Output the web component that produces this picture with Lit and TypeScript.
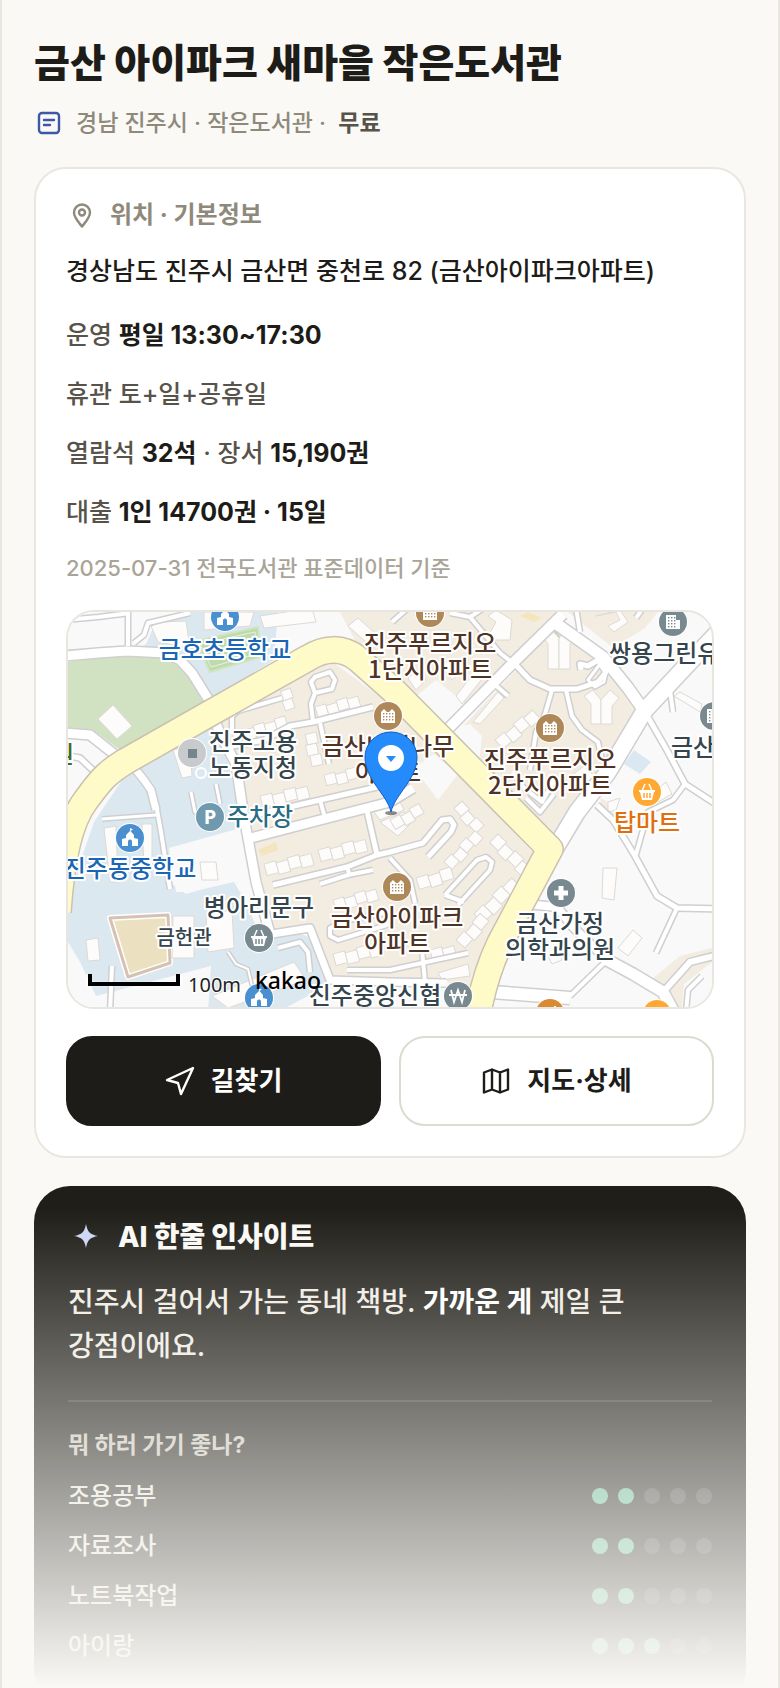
import { LitElement, html, svg, css } from 'lit';
import { customElement, property } from 'lit/decorators.js';

type Place = { x: number; y: number; lines: string[]; tone: string; anchor?: string; small?: boolean };

// [width, points]
const roads: [number, string][] = [
  [4, '-2,8 30,5 62,1'],
  [4, '60,-4 60,34'],
  [4, '66,31 76,23 80,11 122,1'],
  [9, '-4,44 30,41 59,39 98,41 112,48 124,61 142,90'],
  [9, '-4,121 22,123 46,142'],
  [5, '-4,143 12,146 30,163'],
  [7, '64,153 76,168 83,178 88,198'],
  [4, '88,192 93,220 102,277'],
  [3, '34,207 88,203'],
  [3, '123,180 127,200 138,203'],
  [3, '148,172 152,192'],
  [9, '147,108 152,122 168,152 176,205 188,270 202,322'],
  [4, '164,122 164,104 170,99 214,86'],
  [5, '160,135 196,128 222,114 245,110 305,95'],
  [4, '245,110 243,92 247,81 264,77 267,68 262,60 247,65 243,70 247,81'],
  [4, '252,111 261,152'],
  [5, '178,205 252,188 309,175 340,168'],
  [9, '183,226 252,208 322,190 345,176'],
  [4, '252,188 257,206'],
  [5, '205,273 279,255 309,243 299,199'],
  [4, '252,272 280,263 305,258'],
  [4, '279,255 282,264'],
  [4, '322,312 270,328 262,324 262,316 280,308 322,300'],
  [7, '204,322 242,316 262,368 322,370 378,371'],
  [4, '210,336 232,330 240,340 242,360'],
  [4, '279,358 322,358 354,351 400,341'],
  [4, '354,338 357,370'],
  [5, '309,243 322,240 355,231 374,208 382,207 386,213 383,220 360,245'],
  [4, '322,246 342,268 347,291'],
  [4, '377,283 409,248 418,245 424,250 422,258 390,293'],
  [4, '377,283 396,290'],
  [4, '382,1 402,5 432,41 445,51'],
  [4, '340,-4 324,10'],
  [4, '402,5 416,-4'],
  [4, '424,70 440,84'],
  [10, '495,2 445,51 379,118'],
  [5, '447,52 462,68 482,77 509,77 530,70 538,60 530,48 520,54 512,52 513,58'],
  [3, '538,60 536,70 527,75 520,68 532,52'],
  [4, '484,78 477,102 468,120 462,158'],
  [4, '498,78 504,104 514,118 530,130 534,148'],
  [4, '444,160 456,176 474,190 486,168'],
  [11, '483,8 535,45 560,76 577,100'],
  [4, '508,-4 512,20'],
  [4, '575,-4 568,6'],
  [16, '656,14 618,54 577,98 540,160 509,200 485,240'],
  [5, '577,100 600,140 617,172 660,200'],
  [4, '617,172 605,188 580,200 567,246'],
  [4, '602,78 605,100'],
  [5, '529,193 545,208 567,244 589,284 609,296 650,297'],
  [4, '609,296 588,341'],
  [4, '458,186 472,200 486,182'],
  [8, '458,292 489,295 505,315 539,348'],
  [12, '424,380 502,386'],
  [4, '502,384 539,348'],
  [11, '539,348 565,362 595,380 606,400'],
  [6, '597,378 622,350 650,343'],
  [4, '618,400 620,378 634,364'],
  [4, '44,354 42,400'],
  [2, '160,340 168,352 180,357 184,374'],
];

const lots: [string, string][] = [
  ['school', '62,42 78,32 86,14 122,0 210,0 206,48 142,88 124,60 104,44'],
  ['school', '64,153 142,110 160,150 176,218 102,236 108,280 122,280 166,270 178,290 192,324 228,320 254,330 262,372 210,400 140,400 143,354 28,384 12,350 0,330 0,290 8,262 26,210'],
  ['plain', '0,50 0,0 86,0 78,24 60,38'],
  ['plain', '101,236 176,215 190,280 166,268 118,282 104,272'],
  ['park', '-2,50 59,43 99,45 119,61 135,90 52,138 25,118 -2,116'],
  ['pitch', '128,29 190,15 193,45 142,60'],
  ['home', '152,105 259,46 322,92 469,245 408,400 378,368 262,368 242,316 205,318 175,188'],
  ['home', '272,0 492,0 445,48 376,118 362,104 292,38'],
  ['home', '450,56 487,14 535,50 570,98 527,165 482,230 384,126'],
  ['home', '500,0 590,0 577,16 545,36'],
  ['home', '532,186 540,190 560,230 536,204'],
  ['home', '578,372 612,344 644,336 644,350 616,372 614,396 602,396'],
  ['plain', '346,86 368,68 388,84 402,96 378,118 366,116'],
  ['plain', '386,116 402,112 414,124 410,160 386,130'],
  ['plain', '346,156 366,142 390,162 370,188'],
  ['pond', '556,152 566,138 583,150 572,162'],
  ['grass', '482,22 487,18 495,28 490,32'],
  ['sand', '190,238 208,230 210,238 194,244'],
  ['sand', '452,4 460,0 474,6 466,10'],
  ['plain', '616,386 630,362 644,358 644,396 616,396'],
];

const houses = [
  '30,107 45,93 64,114 49,127', '83,14 94,10 118,9 122,36 90,30', '136,0 186,0 182,14 136,18',
  '192,4 244,-4 248,10 196,16', '105,138 122,134 124,164 114,166', '36,216 48,214 50,270 42,270',
  '74,212 84,212 84,254 76,254', '132,250 148,250 150,268 134,268', '105,304 126,304 126,346 104,346',
  '138,302 164,298 166,336 140,340', '18,328 30,326 32,348 20,349', '144,384 226,350 238,368 160,396',
  '535,256 549,256 546,288 534,286', '550,336 565,318 574,326 560,344', '606,84 612,80 634,92 632,100',
  '388,84 410,56 418,62 394,92', '405,110 430,80 436,86 412,112', '370,361 400,352 402,364 374,368',
  '480,57 480,32 473,22 482,16 491,26 491,57', '491,57 491,26 500,16 508,24 502,32 502,57',
  '523,112 523,92 516,84 525,78 533,88 533,112', '533,112 533,88 542,78 551,86 544,94 544,112',
  '418,28 428,10 420,4 428,-2 444,8 442,28', '528,4 548,0 552,8 540,14 546,20 560,10 552,-2',
  '280,14 290,6 308,22 298,30', '374,54 384,46 394,60 384,68', '340,66 350,58 358,68 348,78',
  '500,166 516,154 526,164 514,174', '540,190 552,186 548,198 540,200', '586,180 598,170 604,182 590,190',
  '306,200 332,190 336,198 312,208', '312,210 336,200 342,212 330,224', '480,344 490,340 494,348 484,352',
];

// x, y, angle, count, size
const rows: [number, number, number, number, number][] = [
  [222, 76, 70, 2, 10], [247, 95, -17, 4, 11], [164, 120, -17, 5, 11], [248, 120, 78, 3, 11],
  [192, 184, -14, 4, 12], [256, 163, -14, 4, 11], [196, 252, -15, 4, 12], [250, 238, -15, 4, 12],
  [265, 288, -17, 4, 11], [265, 342, -15, 4, 12], [322, 208, -30, 3, 11], [394, 189, 48, 3, 11],
  [348, 266, -18, 3, 12], [376, 250, -48, 4, 11], [430, 222, 44, 4, 12], [406, 302, -46, 4, 13],
  [362, 338, -15, 2, 12], [388, 328, -48, 3, 12], [427, 128, -41, 4, 12],
];

const places: Place[] = [
  { x: 157, y: 46, lines: ['금호초등학교'], tone: 'blue' },
  { x: 362, y: 40, lines: ['진주푸르지오', '1단지아파트'], tone: 'brown' },
  { x: 541, y: 50, lines: ['쌍용그린유치원'], tone: 'slate', anchor: 'start' },
  { x: 482, y: 156, lines: ['진주푸르지오', '2단지아파트'], tone: 'brown' },
  { x: 603, y: 144, lines: ['금산면사무소'], tone: 'slate', anchor: 'start' },
  { x: 320, y: 143, lines: ['금산비치나무', '아파트'], tone: 'brown' },
  { x: 579, y: 219, lines: ['탑마트'], tone: 'orange' },
  { x: 185, y: 138, lines: ['진주고용', '노동지청'], tone: 'slate' },
  { x: 192, y: 213, lines: ['주차장'], tone: 'teal' },
  { x: 62, y: 265, lines: ['진주동중학교'], tone: 'blue' },
  { x: 191, y: 304, lines: ['병아리문구'], tone: 'slate' },
  { x: 116, y: 333, lines: ['금헌관'], tone: 'slate', small: true },
  { x: 329, y: 314, lines: ['금산아이파크', '아파트'], tone: 'brown' },
  { x: 492, y: 320, lines: ['금산가정', '의학과의원'], tone: 'slate' },
  { x: 307, y: 392, lines: ['진주중앙신협'], tone: 'slate' },
  { x: 6, y: 151, lines: ['공원'], tone: 'green', anchor: 'end' },
];

const markers: [number, number, string, string][] = [
  [157, 5, '#4a90d0', 'school'], [62, 226, '#4a90d0', 'school'], [191, 386, '#4a90d0', 'school'],
  [362, 1, '#ae8858', 'flats'], [482, 116, '#ae8858', 'flats'], [320, 104, '#ae8858', 'flats'],
  [329, 275, '#ae8858', 'flats'], [605, 10, '#788990', 'office'], [646, 104, '#788990', 'office'],
  [579, 180, '#ffa933', 'basket'], [191, 326, '#788990', 'basket'], [142, 205, '#6f99ae', 'parking'],
  [493, 281, '#788990', 'cross'], [390, 384, '#788990', 'won'], [482, 401, '#d98a33', 'food'],
  [589, 402, '#ffa933', 'cross'],
];

const windows = (x: number, y: number, cols: number, lines: number, fill: string) =>
  Array.from({ length: cols * lines }, (_, i) => svg`
    <rect x=${x + (i % cols) * 3} y=${y + Math.floor(i / cols) * 3} width="1.4" height="1.4" fill=${fill} />`);

const glyph = (kind: string, color: string) => {
  switch (kind) {
    case 'school':
      return svg`<path fill="#fff" d="M-8 8V1l4-1v-3l4-4v-3l3 1.500-2.500 1.500 3.500 4v3l4 1v7h-6V3.500a2 2 0 0 0-4 0V8z" />`;
    case 'flats':
      return svg`<path fill="#fff" d="M-7 7V-4l3-3 3 3h2l3-3 3 3V7z" />${windows(-5, -3, 4, 3, color)}`;
    case 'office':
      return svg`<path fill="#fff" d="M-7 7V-7H3v5h4V7z" />${windows(-5, -5, 3, 4, color)}`;
    case 'basket':
      return svg`
        <path fill="#fff" d="M-8-2H8V0H7L5 8H-5L-7 0h-1z" />
        <path fill="none" stroke="#fff" stroke-width="1.500" d="M-5-1-2-8M5-1 2-8" />
        <path stroke=${color} stroke-width="1.500" d="M-3 1v5M0 1v5M3 1v5" />`;
    case 'cross':
      return svg`<path fill="#fff" d="M-2.500-7h5v4.500H7v5H2.500V7h-5V2.500H-7v-5h4.500z" />`;
    case 'parking':
      return svg`<text class="sign" y="7">P</text>`;
    case 'won':
      return svg`<path fill="none" stroke="#fff" stroke-width="1.800" d="M-7-6-4 6 0-6 4 6 7-6M-9-1H9" />`;
    default:
      return svg`<path fill="none" stroke="#fff" stroke-width="2" d="M-8-3h6v5h-6zM1-5v9M5-7V6M1-1h4" />`;
  }
};

@customElement('area-map')
export class AreaMap extends LitElement {
  static styles = css`
    :host {
      display: block;
      border: 2px solid #e9e6df;
      border-radius: 28px;
      overflow: hidden;
    }
    svg {
      display: block;
      width: 100%;
      height: auto;
      background: #f9f9f9;
    }
    .school { fill: #dce8f0; }
    .plain { fill: #f9f9f9; }
    .park { fill: #d1e2c3; }
    .pitch { fill: #bfdbae; stroke: #cfe5c0; stroke-width: 2; }
    .home { fill: #f3ece1; }
    .pond { fill: #dbe8f1; }
    .grass { fill: #bfdbae; }
    .sand { fill: #f3e6be; }
    .house { fill: #fdfcfa; stroke: #dcdad6; stroke-width: 1; }
    .line { fill: none; stroke-linejoin: round; stroke-linecap: butt; }
    .casing { stroke: #cfcfd1; }
    .road { stroke: #fff; }
    .main-casing { stroke: #cbc1b0; stroke-width: 28; }
    .main { stroke: #fffbc9; stroke-width: 25; }
    .label {
      font-family: "Noto Sans CJK KR", sans-serif;
      font-size: 24px;
      font-weight: 500;
      text-anchor: middle;
      stroke: #fff;
      stroke-width: 4px;
      stroke-linejoin: round;
      paint-order: stroke;
    }
    .small { font-size: 20px; }
    .start { text-anchor: start; }
    .end { text-anchor: end; }
    .blue { fill: #1a66b5; }
    .brown { fill: #4f3325; }
    .slate { fill: #34454d; }
    .orange { fill: #e0700e; }
    .teal { fill: #2b6b84; }
    .green { fill: #3f6b2a; }
    .sign {
      font: 700 20px "Open Sans", sans-serif;
      fill: #fff;
      text-anchor: middle;
    }
    .scale { font: 20px "Noto Sans", sans-serif; fill: #222; stroke: #fff; stroke-width: 2px; paint-order: stroke; }
    .brand { font: 500 23px "Noto Sans", sans-serif; }
  `;

  render() {
    return html`
      <svg viewBox="0 0 644 395" role="img" aria-label="지도">
        ${lots.map(([kind, points]) => svg`<polygon class=${kind} points=${points} />`)}
        <path d="M42 306 100 303 102 351 60 365z" fill="#ebe0c0" stroke="#fff" stroke-width="6" stroke-linejoin="round" />
        <path d="M42 306 100 303 102 351 60 365z" fill="none" stroke="#d6c1b3" stroke-width="3" stroke-linejoin="round" />
        <path d="M132 32l55-12 2 22-46 13zM160 26l4 23" fill="none" stroke="#e6f2dd" stroke-width="1" />
        ${houses.map(points => svg`<polygon class="house" points=${points} />`)}
        ${rows.map(([x, y, angle, count, size]) => svg`
          <g transform="translate(${x} ${y}) rotate(${angle})">
            ${Array.from({ length: count }, (_, i) => svg`
              <rect class="house" x=${i * size} y=${(i % 2) * 2} width=${size} height=${size} />`)}
          </g>`)}
        ${roads.map(([width, points]) => svg`
          <polyline class="line casing" points=${points} stroke-width=${width + 3} />`)}
        ${roads.map(([width, points]) => svg`
          <polyline class="line road" points=${points} stroke-width=${width} />`)}
        ${['main-casing', 'main'].map(kind => svg`
          <path class="line ${kind}" d="M-10 300C-6 240 4 206 18 188C34 166 40 160 58 149L139 103 240 46C256 36 274 34 290 47L325 78 482 237 432 331Q418 360 410 400" />`)}

        ${markers.map(([x, y, color, kind]) => svg`
          <g transform="translate(${x} ${y})">
            <circle r="15" fill="#fff" />
            <circle r="14" fill=${color} />
            ${glyph(kind, color)}
          </g>`)}
        <circle cx="124" cy="141" r="15" fill="#fff" />
        <circle cx="124" cy="141" r="14" fill="#c9cacd" />
        <rect x="120" y="137" width="9" height="9" fill="#73868c" />
        <circle cx="133" cy="161" r="5" fill="#dce8f0" stroke="#fff" stroke-width="2" />

        <path d="M20 374V362M112 374V362M18 372H114" fill="none" stroke="#fff" stroke-width="5" opacity="0.6" />
        <path d="M22 362V372H110V362" fill="none" stroke="#000" stroke-width="4" />
        <text class="scale" x="120" y="380">100m</text>

        ${places.map(p => svg`
          <text class="label ${p.tone} ${p.anchor ?? ''} ${p.small ? 'small' : ''}">
            ${p.lines.map((line, i) => svg`<tspan x=${p.x} y=${p.y + i * 26}>${line}</tspan>`)}
          </text>`)}
        <text class="brand" x="187" y="377">kakao</text>

        <ellipse cx="323" cy="201" rx="6" ry="2" fill="#000" opacity="0.45" />
        <path d="M323 200C319 182 297 168 297 145a26 25 0 0 1 52 0C349 168 327 182 323 200z" fill="#258bfb" stroke="#0f5fc4" stroke-width="1" />
        <circle cx="323" cy="146" r="13" fill="#fff" />
        <path d="M318 144h10l-5 6z" fill="#258bfb" />
      </svg>
    `;
  }
}

@customElement('purpose-row')
export class PurposeRow extends LitElement {
  @property() label = '';
  @property({ type: Number }) score = 0;

  static styles = css`
    :host {
      display: flex;
      align-items: center;
      justify-content: space-between;
      height: 50px;
      font-size: 24px;
      line-height: 32px;
      font-weight: 500;
      color: #e8e5dc;
    }
    .dots {
      display: flex;
      gap: 10px;
    }
    .dot {
      width: 16px;
      height: 16px;
      border-radius: 50%;
      background: rgba(255, 255, 255, 0.14);
    }
    .on {
      background: #5fb890;
    }
  `;

  render() {
    return html`
      <span>${this.label}</span>
      <span class="dots" role="img" aria-label="5점 중 ${this.score}점">
        ${[1, 2, 3, 4, 5].map(n => html`<span class="dot ${n <= this.score ? 'on' : ''}"></span>`)}
      </span>
    `;
  }
}

@customElement('app-root')
export class AppRoot extends LitElement {
  purposes = [
    { label: '조용공부', score: 2 },
    { label: '자료조사', score: 2 },
    { label: '노트북작업', score: 2 },
    { label: '아이랑', score: 3 },
  ];

  static styles = css`
    :host {
      display: block;
      position: relative;
      box-sizing: border-box;
      height: 100vh;
      overflow: hidden;
      padding: 37px 32px 0;
      border: solid #e9e7e0;
      border-width: 0 2px;
      background: #faf9f5;
      color: #1d1c18;
      font-family: Inter, "Noto Sans CJK KR", sans-serif;
      font-weight: 500;
      word-break: keep-all;
    }
    h1, h2, h3, p {
      margin: 0;
    }
    svg {
      flex: none;
      fill: none;
      stroke: currentColor;
      stroke-width: 2.4;
      stroke-linecap: round;
      stroke-linejoin: round;
    }
    h1 {
      font-size: 39px;
      line-height: 52px;
      font-weight: 800;
    }
    .meta {
      display: flex;
      align-items: center;
      gap: 12px;
      margin: 18px 0 28px;
      font-size: 23px;
      line-height: 32px;
      color: #8f897c;
    }
    .meta svg {
      color: #3f57a8;
    }
    .meta b {
      margin-left: 6px;
      color: #57534a;
    }
    .card {
      padding: 30px;
      border: 2px solid #e9e7e0;
      border-radius: 32px;
      background: #fff;
    }
    .card h2 {
      display: flex;
      align-items: center;
      gap: 12px;
      font-size: 24px;
      line-height: 32px;
      color: #8f897c;
    }
    .address {
      margin: 18px 0 13px;
      font-size: 25px;
      line-height: 44px;
    }
    .fact {
      font-size: 25px;
      line-height: 59px;
      color: #57534a;
    }
    .fact b {
      color: #1d1c18;
    }
    .source {
      margin: 11px 0 27px;
      font-size: 22px;
      line-height: 30px;
      color: #aaa498;
    }
    .actions {
      display: grid;
      grid-template-columns: 1fr 1fr;
      gap: 18px;
      margin-top: 27px;
    }
    button {
      display: flex;
      align-items: center;
      justify-content: center;
      gap: 16px;
      height: 90px;
      padding: 0;
      border: 2px solid #dddad0;
      border-radius: 26px;
      background: #fff;
      color: #1d1c18;
      font: inherit;
      font-size: 26px;
      line-height: 32px;
      font-weight: 700;
      cursor: pointer;
    }
    .primary {
      border-color: #1d1c18;
      background: #1d1c18;
      color: #fff;
    }
    .insight {
      margin-top: 28px;
      padding: 31px 34px 34px;
      border-radius: 36px;
      background: #1f1e19;
      color: #efece3;
    }
    .insight h2 {
      display: flex;
      align-items: center;
      gap: 14px;
      font-size: 28px;
      line-height: 40px;
      font-weight: 800;
      color: #faf9f5;
    }
    .spark {
      fill: #cbd7f5;
      stroke: none;
    }
    .summary {
      margin: 23px 0 32px;
      font-size: 28px;
      line-height: 44px;
    }
    .summary b {
      color: #fff;
    }
    .insight h3 {
      padding-top: 27px;
      margin-bottom: 10px;
      border-top: 2px solid rgba(255, 255, 255, 0.12);
      font-size: 23px;
      line-height: 32px;
      color: #c9c5ba;
    }
    .fade {
      position: absolute;
      left: -2px;
      right: -2px;
      bottom: 0;
      height: 480px;
      background: linear-gradient(rgba(250, 249, 245, 0), #faf9f5);
      pointer-events: none;
    }
  `;

  render() {
    return html`
      <h1>금산 아이파크 새마을 작은도서관</h1>
      <p class="meta">
        <svg width="30" height="30" viewBox="0 0 30 30">
          <rect x="5" y="5" width="20" height="20" rx="3" />
          <path d="M10 12h10M10 17h6" />
        </svg>
        <span>경남 진주시 · 작은도서관 · <b>무료</b></span>
      </p>

      <section class="card">
        <h2>
          <svg width="32" height="32" viewBox="0 0 32 32">
            <path d="M16 27.500c-4-5-8-9-8-14a8 8 0 0 1 16 0c0 5-4 9-8 14z" />
            <circle cx="16" cy="13.500" r="3" />
          </svg>
          위치 · 기본정보
        </h2>
        <p class="address">경상남도 진주시 금산면 중천로 82 (금산아이파크아파트)</p>
        <p class="fact">운영 <b>평일 13:30~17:30</b></p>
        <p class="fact">휴관 토+일+공휴일</p>
        <p class="fact">열람석 <b>32석</b> · 장서 <b>15,190권</b></p>
        <p class="fact">대출 <b>1인 14700권 · 15일</b></p>
        <p class="source">2025-07-31 전국도서관 표준데이터 기준</p>
        <area-map></area-map>
        <div class="actions">
          <button class="primary">
            <svg width="30" height="30" viewBox="0 0 30 30">
              <path d="M28 2 2 14l11 3 3 11z" />
            </svg>
            길찾기
          </button>
          <button>
            <svg width="30" height="30" viewBox="0 0 30 30">
              <path d="M3 6.500 11 3.500l8 3 8-3v20l-8 3-8-3-8 3zM11 3.500v20M19 6.500v20" />
            </svg>
            지도·상세
          </button>
        </div>
      </section>

      <section class="insight">
        <h2>
          <svg class="spark" width="36" height="28" viewBox="0 0 36 28">
            <path d="M18 1c1.500 8 4 10.500 12 12-8 1.500-10.500 4-12 12-1.500-8-4-10.500-12-12 8-1.500 10.500-4 12-12z" />
          </svg>
          AI 한줄 인사이트
        </h2>
        <p class="summary">진주시 걸어서 가는 동네 책방. <b>가까운 게</b> 제일 큰 강점이에요.</p>
        <h3>뭐 하러 가기 좋나?</h3>
        ${this.purposes.map(p => html`<purpose-row .label=${p.label} .score=${p.score}></purpose-row>`)}
      </section>
      <div class="fade"></div>
    `;
  }
}
